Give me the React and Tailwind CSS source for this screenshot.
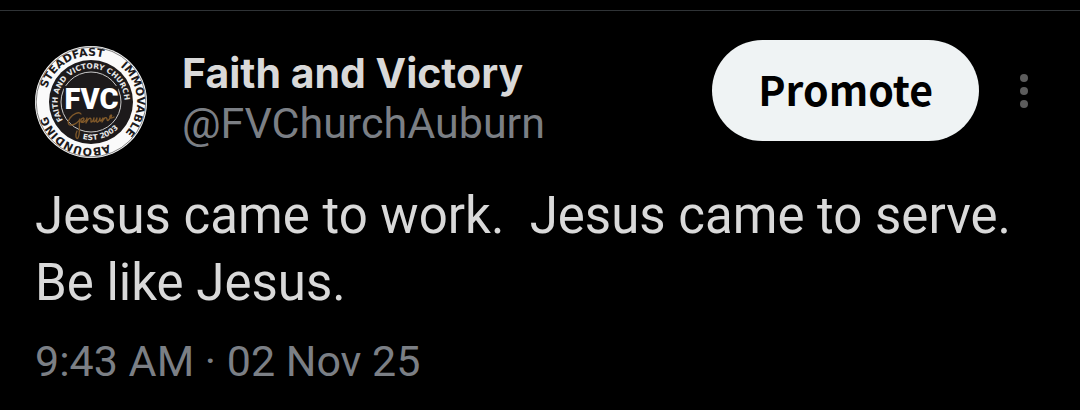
function Avatar() {
  return (
    <svg viewBox="0 0 112 112" className="size-28 shrink-0" role="img" aria-label="Faith and Victory Church logo">
      <defs>
        <path id="ring-outer" d="M10.2 60A46 46 0 1 1 10.3 61" />
        <path id="ring-inner" d="M27.9 74.2A33.5 33.5 0 1 1 86.4 70.2" />
        <path id="ring-base" d="M47.5 93A38 38 0 0 0 91.7 69" />
      </defs>
      <circle cx="56" cy="56" r="56" fill="#fafafa" />
      <circle cx="56" cy="56" r="54.8" fill="none" stroke="#333" strokeWidth="0.6" />
      <circle cx="56" cy="56" r="42" fill="#1d1a1b" />
      <circle cx="56" cy="56" r="30" fill="none" stroke="#c9c9c9" strokeWidth="1" />
      <g fontFamily="'DejaVu Sans', sans-serif" fontWeight="700">
        <g fontSize="11" fill="#1d1a1b" textAnchor="middle">
          <text><textPath href="#ring-outer" startOffset="53">STEADFAST</textPath></text>
          <text><textPath href="#ring-outer" startOffset="145">IMMOVABLE</textPath></text>
          <text><textPath href="#ring-outer" startOffset="240">ABOUNDING</textPath></text>
        </g>
        <g fontSize="7.5" fill="#e6e6e6">
          <text><textPath href="#ring-inner">FAITH AND VICTORY CHURCH</textPath></text>
          <text><textPath href="#ring-base">EST 2003</textPath></text>
        </g>
      </g>
      <rect x="29" y="40" width="54" height="25" fill="#1d1a1b" />
      <text x="56.5" y="63" textAnchor="middle" fontFamily="Roboto, sans-serif" fontWeight="900" fontSize="29" fill="#fff">FVC</text>
      <g fill="none" stroke="#80592a" strokeWidth="1.3" strokeLinecap="round" strokeLinejoin="round">
        <path d="M46 68c-2-3-8 0-11 4-3 4-2 8 2 7 4-1 7-4 8-6-2 7 1 13-2 19-2 2-3-3-1-7" />
        <path d="M46 76c3-1 4-4 2-4-3 1-3 6 1 4 3-2 3-4 3-4l-1 5c2-4 4-6 5-4v3c2 0 3-4 3-4-1 5 1 5 3 0-1 5 0 5 2 3l1-3c0 5 1 3 3 0l-1 4c2-4 4-6 5-3 0 3 2 1 3-1 2-2 2-3 1-3-2 1-2 5 3 2" />
      </g>
    </svg>
  );
}

export default function App() {
  return (
    <main className="min-h-screen bg-black pt-2.5 font-['Roboto',sans-serif] text-[#d9d9d9]">
      <article className="border-t border-[#2f3336] pr-11 pl-[35px]">
        <header className="flex items-start pt-[29px]">
          <div className="flex min-w-0 flex-1 items-start gap-[35px] pt-1.5">
            <Avatar />
            <div className="min-w-0 pt-0.5 text-[43px] leading-[50px]">
              <h1 className="truncate font-['Inter',sans-serif] text-[41px] font-bold">Faith and Victory</h1>
              <p className="truncate text-[#7b7f85]">@FVChurchAuburn</p>
            </div>
          </div>
          <button type="button" className="h-[101px] shrink-0 rounded-full bg-[#eff3f4] px-[46px] pb-1 font-['Noto_Sans_CJK_JP',sans-serif] text-[41px] font-bold text-black">
            Promote
          </button>
          <button type="button" aria-label="More options" className="ml-[33px] flex h-[101px] w-6 shrink-0 items-center justify-center">
            <svg viewBox="0 0 8 34" className="h-[34px] w-2" fill="#5c5c5c">
              <circle cx="4" cy="4" r="4" />
              <circle cx="4" cy="17" r="4" />
              <circle cx="4" cy="30" r="4" />
            </svg>
          </button>
        </header>
        <p className="pt-6 text-[51px] leading-[67px] whitespace-pre-wrap">
          {"Jesus came to work.  Jesus came to serve.\nBe like Jesus."}
        </p>
        <time dateTime="2025-11-02T09:43" className="block pt-5 text-[43px] leading-[50px] text-[#7b7f85]">
          9:43 AM · 02 Nov 25
        </time>
      </article>
    </main>
  );
}
